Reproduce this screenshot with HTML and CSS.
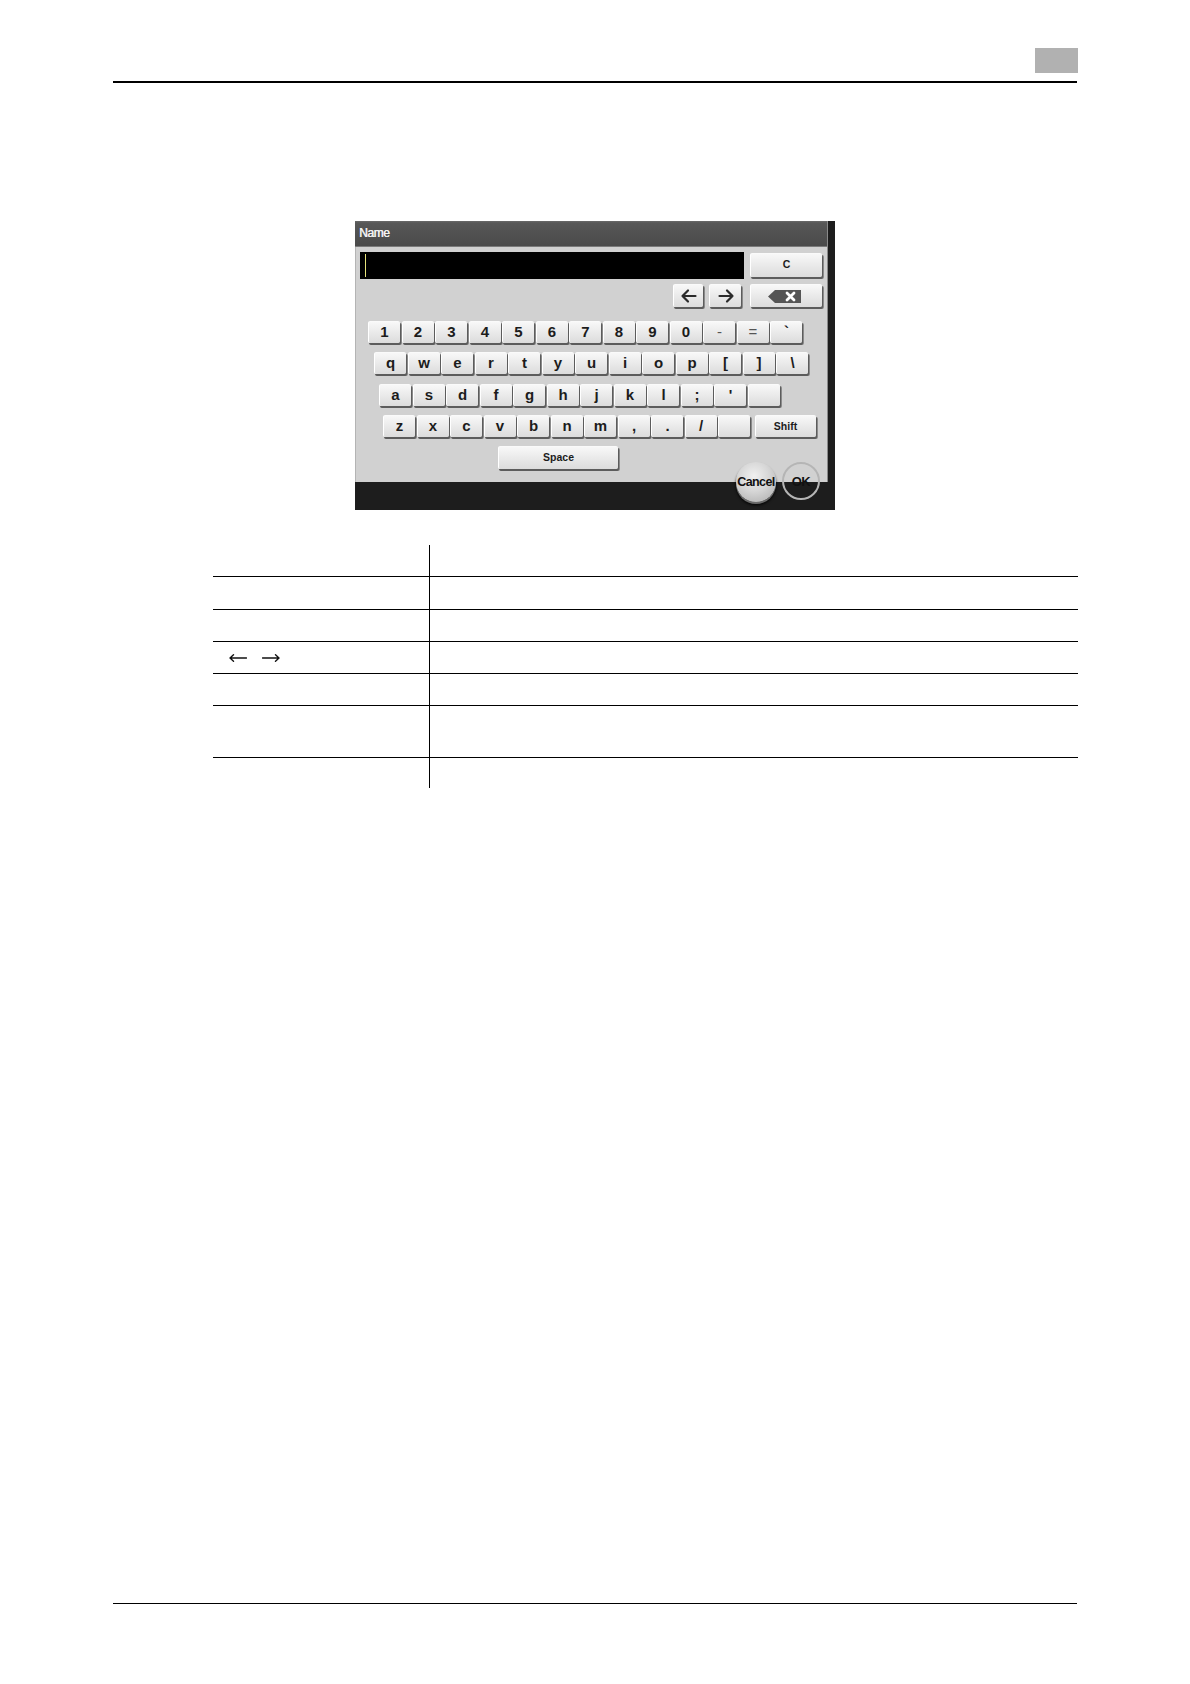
FILE: index.html
```html
<!DOCTYPE html>
<html lang="en">
<head>
<meta charset="utf-8">
<title>Name entry keyboard</title>
<link rel="stylesheet" href="styles.css">
</head>
<body>
<div class="page">
  <header class="head">
    <div class="head-tab"></div>
  </header>
  <div class="head-rule"></div>

  <main class="main">
    <div class="device">
      <div class="screen">
        <div class="titlebar">Name</div>
        <div class="panel">
          <div class="row-input">
            <div class="field"><span class="cursor"></span></div>
            <div class="key key-wide key-small">C</div>
          </div>
          <div class="row-nav">
            <div class="key key-arrow">
              <svg width="20" height="16" viewBox="0 0 20 16"><path d="M9 2.5 L3.5 8 L9 13.5 M3.5 8 H16.5" fill="none" stroke="#2a2a2a" stroke-width="2.2" stroke-linecap="round" stroke-linejoin="round"/></svg>
            </div>
            <div class="key key-arrow key-arrow-r">
              <svg width="20" height="16" viewBox="0 0 20 16"><path d="M11 2.5 L16.5 8 L11 13.5 M16.5 8 H3.5" fill="none" stroke="#2a2a2a" stroke-width="2.2" stroke-linecap="round" stroke-linejoin="round"/></svg>
            </div>
            <div class="key key-wide key-bs">
              <svg width="33" height="13" viewBox="0 0 33 13"><path d="M7 0 H33 V13 H7 L0 6.5 Z" fill="#555"/><path d="M19 3 L26 10 M26 3 L19 10" stroke="#fff" stroke-width="2.8" stroke-linecap="round"/></svg>
            </div>
          </div>
          <div class="krow krow-1">
            <div class="key">1</div><div class="key">2</div><div class="key">3</div><div class="key">4</div><div class="key">5</div><div class="key">6</div><div class="key">7</div><div class="key">8</div><div class="key">9</div><div class="key">0</div><div class="key key-light">-</div><div class="key key-light">=</div><div class="key">`</div>
          </div>
          <div class="krow krow-2">
            <div class="key">q</div><div class="key">w</div><div class="key">e</div><div class="key">r</div><div class="key">t</div><div class="key">y</div><div class="key">u</div><div class="key">i</div><div class="key">o</div><div class="key">p</div><div class="key">[</div><div class="key">]</div><div class="key">\</div>
          </div>
          <div class="krow krow-3">
            <div class="key">a</div><div class="key">s</div><div class="key">d</div><div class="key">f</div><div class="key">g</div><div class="key">h</div><div class="key">j</div><div class="key">k</div><div class="key">l</div><div class="key">;</div><div class="key">'</div><div class="key"></div>
          </div>
          <div class="krow krow-4">
            <div class="key">z</div><div class="key">x</div><div class="key">c</div><div class="key">v</div><div class="key">b</div><div class="key">n</div><div class="key">m</div><div class="key">,</div><div class="key">.</div><div class="key">/</div><div class="key"></div><div class="key key-shift key-small">Shift</div>
          </div>
          <div class="krow krow-5">
            <div class="key key-space key-small">Space</div>
          </div>
        </div>
      </div>
      <div class="btn-round btn-cancel">Cancel</div>
      <div class="btn-round btn-ok">OK</div>
    </div>

    <table class="desc">
      <tr class="r1"><td class="k"></td><td></td></tr>
      <tr class="r2"><td class="k"></td><td></td></tr>
      <tr class="r3"><td class="k"></td><td></td></tr>
      <tr class="r4"><td class="k arrows"><span class="arr"><svg width="18" height="10" viewBox="0 0 18 10" aria-label="←"><path d="M1 5 H17.5 M1 5 L4.5 1.8 M1 5 L4.5 8.2" fill="none" stroke="#111" stroke-width="1.4" stroke-linecap="round"/></svg></span><span class="arr"><svg width="18" height="10" viewBox="0 0 18 10" aria-label="→"><path d="M0.5 5 H17 M17 5 L13.5 1.8 M17 5 L13.5 8.2" fill="none" stroke="#111" stroke-width="1.4" stroke-linecap="round"/></svg></span></td><td></td></tr>
      <tr class="r5"><td class="k"></td><td></td></tr>
      <tr class="r6"><td class="k"></td><td></td></tr>
      <tr class="r7"><td class="k"></td><td></td></tr>
    </table>
  </main>

  <footer class="foot-rule"></footer>
</div>
</body>
</html>
```

FILE: styles.css
```css
* { box-sizing: border-box; }

html, body {
  margin: 0;
  padding: 0;
  background: #ffffff;
}

body {
  font-family: "Liberation Sans", Arial, sans-serif;
  color: #000;
}

.page {
  width: 1190px;
  min-height: 1684px;
  display: flex;
  flex-direction: column;
}

/* ---------- page header ---------- */
.head {
  display: flex;
  justify-content: flex-end;
  padding: 48px 112px 0 0;
}

.head-tab {
  width: 43px;
  height: 25px;
  background: #b1b1b1;
}

.head-rule {
  margin: 8px 0 0 113px;
  width: 964px;
  height: 1.5px;
  background: #000;
}

/* ---------- device screenshot ---------- */
.device {
  position: relative;
  margin: 138.5px 0 0 355px;
  width: 480px;
  height: 289px;
  background: #1d1d1d;
}

.screen {
  width: 473px;
  display: flex;
  flex-direction: column;
  border-right: 1px solid #8a8a8a;
}

.titlebar {
  height: 26px;
  padding-left: 4px;
  background: linear-gradient(#6a6a6a 0, #575757 8%, #4a4a4a 100%);
  border-bottom: 1px solid #7a7a7a;
  color: #f2f2f2;
  font-size: 12px;
  line-height: 25px;
  letter-spacing: -0.4px;
  text-shadow: 0.4px 0 0 #f2f2f2;
}

.panel {
  height: 235px;
  background: #d1d1d1;
  border-left: 1px solid #b4b4b4;
  padding-top: 5px;
}

.row-input {
  display: flex;
  align-items: flex-start;
  padding-left: 4px;
}

.field {
  width: 384px;
  height: 27px;
  background: #000;
  padding: 2px 0 0 5px;
}

.cursor {
  display: block;
  width: 1px;
  height: 23px;
  background: #e6e27a;
}

.row-nav {
  display: flex;
  margin: 5px 0 0 317px;
}

/* keys */
.key {
  flex: none;
  width: 32px;
  height: 22px;
  border-radius: 2px;
  background: linear-gradient(#f8f8f8, #e4e4e4 70%, #dcdcdc);
  border-left: 1px solid #ffffff;
  border-top: 1px solid #fafafa;
  box-shadow: 1px 2px 0 #5c5c5c, 2px 2px 0 #8a8a8a;
  color: #1c1c1c;
  font-weight: bold;
  font-size: 15px;
  line-height: 20px;
  text-align: center;
}

.key-light { color: #555; font-weight: normal; }

.key-small {
  font-size: 10.5px;
  line-height: 21px;
}

.key-wide {
  width: 72px;
  height: 24px;
  margin-left: 6px;
  margin-top: 1px;
}

.key-arrow {
  width: 30px;
  height: 23px;
  display: flex;
  align-items: center;
  justify-content: center;
}

.key-arrow-r {
  width: 32px;
  margin-left: 6px;
}

.key-bs {
  margin: 0 0 0 9px;
  height: 23px;
  display: flex;
  align-items: center;
  justify-content: center;
  padding-right: 4px;
}

.krow {
  display: flex;
  gap: 1.5px;
}

.krow-1 { margin: 14px 0 0 12px; }
.krow-2 { margin: 9.3px 0 0 18px; }
.krow-3 { margin: 9.3px 0 0 23px; }
.krow-4 { margin: 9.3px 0 0 27px; }
.krow-5 { margin: 9px 0 0 142px; }

.key-shift {
  width: 61px;
  margin-left: 3px;
}

.key-space {
  width: 120px;
  height: 23px;
}

/* round buttons (overlapping bottom edge) */
.btn-round {
  position: absolute;
  border-radius: 50%;
  display: flex;
  align-items: center;
  justify-content: center;
  font-weight: bold;
  color: #111;
  white-space: nowrap;
}

.btn-cancel {
  left: 381px;
  top: 241px;
  width: 40px;
  height: 40px;
  background: radial-gradient(circle at 45% 35%, #f0f0f0 0, #d6d6d6 45%, #a9a9a9 100%);
  box-shadow: 0 2px 0 #6a6a6a, 0 3px 3px #000;
  font-size: 12.5px;
  letter-spacing: -0.6px;
}

.btn-ok {
  left: 427px;
  top: 241px;
  width: 38px;
  height: 38px;
  border: 2px solid #b5b5b5;
  background: transparent;
  font-size: 13px;
  letter-spacing: -0.5px;
}

/* ---------- description table ---------- */
.desc {
  margin: 35px 0 0 213px;
  width: 865px;
  border-collapse: collapse;
  table-layout: fixed;
}

.desc td {
  padding: 0;
  border-bottom: 1px solid #000;
  font-size: 13px;
}

.desc tr:last-child td { border-bottom: none; }

.desc td.k {
  width: 216px;
  border-right: 1px solid #000;
}

.r1 { height: 31px; }
.r2 { height: 33px; }
.r3 { height: 32px; }
.r4 { height: 32px; }
.r5 { height: 32px; }
.r6 { height: 52px; }
.r7 { height: 31px; }

.arrows {
  padding-left: 16px !important;
}

.arrows .arr {
  display: inline-flex;
  vertical-align: middle;
  width: 33px;
}

/* ---------- footer ---------- */
.foot-rule {
  margin: auto 0 80px 113px;
  width: 964px;
  height: 1.5px;
  background: #000;
}
```
